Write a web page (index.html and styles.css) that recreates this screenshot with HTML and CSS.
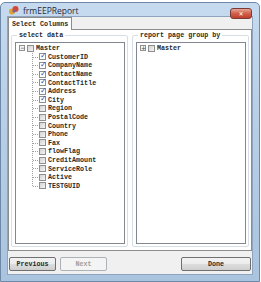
FILE: index.html
```html
<!DOCTYPE html>
<html lang="en">
<head>
    <meta charset="UTF-8">
    <title>frmEEPReport</title>
    <link rel="stylesheet" href="styles.css">
</head>
<body>
    <div class="window">
        <div class="titlebar">
            <svg class="app-icon" width="10" height="9" viewBox="0 0 10 9">
                <circle cx="3" cy="5.5" r="3" fill="#e0a22e"/>
                <circle cx="6.5" cy="3" r="3" fill="#d2493c"/>
                <circle cx="5" cy="5" r="1.6" fill="#7d5fa8"/>
            </svg>
            <span class="title">frmEEPReport</span>
            <div class="close-btn">&#x2715;</div>
        </div>
        <div class="client">
            <div class="tabs">
                <div class="tab active">Select Columns</div>
            </div>
            <div class="tabpage">
                <fieldset class="group">
                    <legend>select data</legend>
                    <div class="tree">
                        <div class="node root">
                            <span class="expander">&minus;</span>
                            <span class="check"></span>
                            <span class="label">Master</span>
                        </div>
                        <div class="children">
                            <div class="node"><span class="check on">&#10003;</span><span class="label">CustomerID</span></div>
                            <div class="node"><span class="check on">&#10003;</span><span class="label">CompanyName</span></div>
                            <div class="node"><span class="check on">&#10003;</span><span class="label">ContactName</span></div>
                            <div class="node"><span class="check on">&#10003;</span><span class="label">ContactTitle</span></div>
                            <div class="node"><span class="check on">&#10003;</span><span class="label">Address</span></div>
                            <div class="node"><span class="check on">&#10003;</span><span class="label">City</span></div>
                            <div class="node"><span class="check"></span><span class="label">Region</span></div>
                            <div class="node"><span class="check"></span><span class="label">PostalCode</span></div>
                            <div class="node"><span class="check"></span><span class="label">Country</span></div>
                            <div class="node"><span class="check"></span><span class="label">Phone</span></div>
                            <div class="node"><span class="check"></span><span class="label">Fax</span></div>
                            <div class="node"><span class="check"></span><span class="label">flowFlag</span></div>
                            <div class="node"><span class="check"></span><span class="label">CreditAmount</span></div>
                            <div class="node"><span class="check"></span><span class="label">ServiceRole</span></div>
                            <div class="node"><span class="check"></span><span class="label">Active</span></div>
                            <div class="node last"><span class="check"></span><span class="label">TESTGUID</span></div>
                        </div>
                    </div>
                </fieldset>
                <fieldset class="group">
                    <legend>report page group by</legend>
                    <div class="tree">
                        <div class="node root">
                            <span class="expander">+</span>
                            <span class="check"></span>
                            <span class="label">Master</span>
                        </div>
                    </div>
                </fieldset>
            </div>
            <div class="footer">
                <button class="btn">Previous</button>
                <button class="btn" disabled>Next</button>
                <span class="spacer"></span>
                <button class="btn done">Done</button>
            </div>
        </div>
    </div>
</body>
</html>
```

FILE: styles.css
```css
body {
    margin: 0;
    padding: 2px 0 0 0;
    background: #fff;
}
.window {
    width: 260px;
    height: 280px;
    box-sizing: border-box;
    border: 1px solid #6e89a8;
    border-radius: 5px 5px 0 0;
    background: linear-gradient(#c6daef, #b8cfe7 40%, #aac4df);
    padding: 0 6px 6px 6px;
    display: flex;
    flex-direction: column;
}
.titlebar {
    height: 19px;
    display: flex;
    align-items: center;
    position: relative;
    padding-top: 1px;
    box-sizing: border-box;
}
.app-icon {
    margin-left: 2px;
    margin-right: 4px;
}
.title {
    font-family: "Open Sans", "DejaVu Sans", sans-serif;
    font-size: 8.5px;
    color: #1e2b3c;
}
.close-btn {
    position: absolute;
    right: 1px;
    top: 5px;
    width: 20px;
    height: 9px;
    border: 1px solid #7b3a34;
    border-radius: 3px;
    background: linear-gradient(#e8a597, #d1604c 50%, #c0402c);
    color: #fff;
    font-family: "DejaVu Sans", sans-serif;
    font-size: 6px;
    font-weight: bold;
    line-height: 9px;
    text-align: center;
}
.client {
    flex: 1;
    background: #f0f0f0;
    border: 1px solid #8ea4bf;
    display: flex;
    flex-direction: column;
    font-family: "Liberation Mono", "DejaVu Sans Mono", monospace;
    font-size: 6.7px;
    font-weight: bold;
    color: #2a2a2a;
}
.tabs {
    display: flex;
    height: 12px;
    align-items: flex-end;
}
.tab {
    background: #fff;
    border: 1px solid #8c8c8c;
    border-bottom: none;
    height: 12px;
    padding: 0 3px;
    line-height: 12px;
    position: relative;
    top: 1px;
}
.tabpage {
    height: 216px;
    background: #fff;
    border: 1px solid #8c8c8c;
    display: flex;
    gap: 4px;
    padding: 1px 2px 3px 2px;
}
.group {
    flex: 1;
    margin: 0;
    padding: 2px 2px 2px 3px;
    border: 1px solid #d5dfe5;
    border-radius: 2px;
    display: flex;
    min-width: 0;
}
.group legend {
    padding: 0 2px;
    margin-left: 2px;
    line-height: 9px;
}
.tree {
    flex: 1;
    border: 1px solid #828790;
    background: #fff;
    padding: 1px 2px;
}
.node {
    display: flex;
    align-items: center;
    height: 8.6px;
    position: relative;
}
.root {
    padding-left: 1px;
}
.expander {
    width: 6px;
    height: 6px;
    box-sizing: border-box;
    border: 1px solid #919191;
    background: #f4f4f4;
    color: #444;
    font-family: "DejaVu Sans", sans-serif;
    font-size: 6px;
    line-height: 4px;
    text-align: center;
    font-weight: normal;
    margin-right: 2px;
}
.check {
    width: 7px;
    height: 7px;
    box-sizing: border-box;
    border: 1px solid #8f8f8f;
    background: linear-gradient(135deg, #d4d4d4, #f4f4f4);
    margin-right: 2px;
    color: #2c4fae;
    font-family: "DejaVu Sans", sans-serif;
    font-size: 8px;
    line-height: 4px;
    text-align: center;
    overflow: visible;
}
.check.on {
    background: #fff;
}
.children {
    margin-left: 14px;
    border-left: 1px dotted #a0a0a0;
    height: 133px;
}
.children .node {
    padding-left: 6px;
}
.children .node::before {
    content: "";
    position: absolute;
    left: 0;
    top: 4px;
    width: 5px;
    border-top: 1px dotted #a0a0a0;
}
.footer {
    display: flex;
    align-items: center;
    gap: 4px;
    padding: 6px 1px 3px 1px;
}
.spacer {
    flex: 1;
}
.btn {
    height: 14px;
    width: 47px;
    padding: 0;
    border: 1px solid #707070;
    border-radius: 2px;
    background: linear-gradient(#f2f2f2, #ebebeb 50%, #dddddd 51%, #cfcfcf);
    font-family: "Liberation Mono", "DejaVu Sans Mono", monospace;
    font-size: 6.7px;
    font-weight: bold;
    color: #2a2a2a;
}
.btn:disabled {
    border-color: #adb2b5;
    background: #f4f4f4;
    color: #a0a0a0;
}
.done {
    width: 70px;
}
```
